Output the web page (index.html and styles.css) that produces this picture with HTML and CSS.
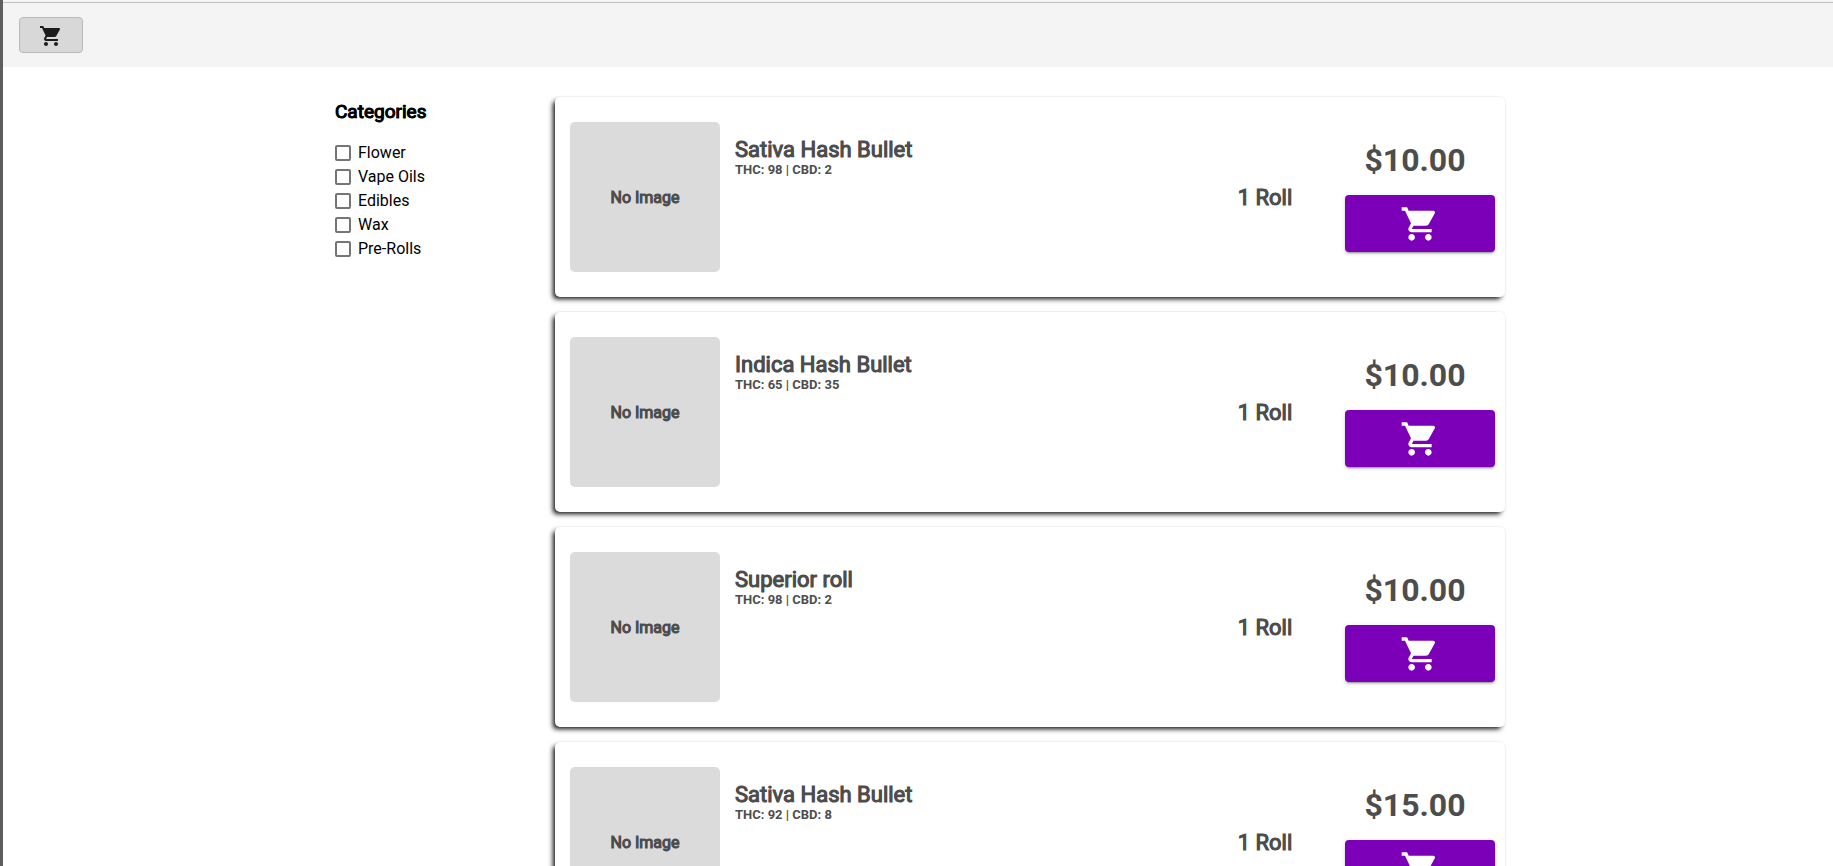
FILE: index.html
```html
<!DOCTYPE html>
<html lang="en">
<head>
<meta charset="utf-8">
<title>Shop</title>
<link rel="stylesheet" href="styles.css">
</head>
<body>
<svg class="sprite" aria-hidden="true"><symbol id="cart" viewBox="0 0 24 24"><path d="M7 18c-1.1 0-1.99.9-1.99 2S5.9 22 7 22s2-.9 2-2-.9-2-2-2zM1 2v2h2l3.6 7.59-1.35 2.45c-.16.28-.25.61-.25.96 0 1.1.9 2 2 2h12v-2H7.42c-.14 0-.25-.11-.25-.25l.03-.12.9-1.63h7.45c.75 0 1.41-.41 1.75-1.03l3.58-6.49c.08-.14.12-.31.12-.48 0-.55-.45-1-1-1H5.21l-.94-2H1zm16 16c-1.1 0-1.99.9-1.99 2s.89 2 1.99 2 2-.9 2-2-.9-2-2-2z"/></symbol></svg>
<header class="topbar">
  <button class="topbar-cart" type="button" aria-label="View cart"><svg class="icon"><use href="#cart"/></svg></button>
</header>
<div class="shop">
  <aside class="filters">
    <h3 class="filters-title">Categories</h3>
    <label class="filter"><input class="check" type="checkbox">Flower</label>
    <label class="filter"><input class="check" type="checkbox">Vape Oils</label>
    <label class="filter"><input class="check" type="checkbox">Edibles</label>
    <label class="filter"><input class="check" type="checkbox">Wax</label>
    <label class="filter"><input class="check" type="checkbox">Pre-Rolls</label>
  </aside>
  <main class="products">
    <article class="card">
      <div class="thumb">No Image</div>
      <div class="info"><h2 class="name">Sativa Hash Bullet</h2><p class="stats">THC: 98 | CBD: 2</p></div>
      <div class="unit">1 Roll</div>
      <div class="buy"><div class="price">$10.00</div><button class="add" type="button" aria-label="Add to cart"><svg class="icon-large"><use href="#cart"/></svg></button></div>
    </article>
    <article class="card">
      <div class="thumb">No Image</div>
      <div class="info"><h2 class="name">Indica Hash Bullet</h2><p class="stats">THC: 65 | CBD: 35</p></div>
      <div class="unit">1 Roll</div>
      <div class="buy"><div class="price">$10.00</div><button class="add" type="button" aria-label="Add to cart"><svg class="icon-large"><use href="#cart"/></svg></button></div>
    </article>
    <article class="card">
      <div class="thumb">No Image</div>
      <div class="info"><h2 class="name">Superior roll</h2><p class="stats">THC: 98 | CBD: 2</p></div>
      <div class="unit">1 Roll</div>
      <div class="buy"><div class="price">$10.00</div><button class="add" type="button" aria-label="Add to cart"><svg class="icon-large"><use href="#cart"/></svg></button></div>
    </article>
    <article class="card">
      <div class="thumb">No Image</div>
      <div class="info"><h2 class="name">Sativa Hash Bullet</h2><p class="stats">THC: 92 | CBD: 8</p></div>
      <div class="unit">1 Roll</div>
      <div class="buy"><div class="price">$15.00</div><button class="add" type="button" aria-label="Add to cart"><svg class="icon-large"><use href="#cart"/></svg></button></div>
    </article>
  </main>
</div>
</body>
</html>
```
FILE: styles.css
```css
* { box-sizing: border-box; }
html { scrollbar-width: none; }
body {
  margin: 0;
  min-height: 100vh;
  border-left: 3px solid #5e5e5e;
  background: #fff;
  color: #000;
  font-family: Roboto, sans-serif;
  font-size: 16px;
}
.sprite { display: none; }
h2, h3, p { margin: 0; }
.topbar {
  display: flex;
  height: 67px;
  padding: 17px 16px 14px;
  background: linear-gradient(#f4f4f4 2px, #c0c0c0 2px, #c0c0c0 3px, #f4f4f4 3px);
}
.topbar-cart {
  display: flex;
  align-items: center;
  justify-content: center;
  width: 64px;
  height: 36px;
  padding: 2px 0 0;
  border: 1px solid #bababa;
  border-radius: 4px;
  background: #d8d8d8;
  color: #1c1c1c;
}
.icon { width: 24px; height: 24px; fill: currentColor; }
.icon-large { width: 40px; height: 40px; fill: currentColor; }
.shop {
  display: grid;
  grid-template-columns: 220px minmax(0, 950px);
  justify-content: center;
  padding: 30px 0 0 4px;
}
.filters { padding-top: 4px; }
.filters-title,
.name,
.unit,
.thumb {
  font-weight: 400;
  -webkit-text-stroke: 1px currentColor;
  text-shadow: 0 0 0 currentColor;
}
.filters-title {
  margin-bottom: 18px;
  font-size: 19px;
  line-height: 22px;
}
.filter {
  display: flex;
  align-items: center;
  gap: 7px;
  line-height: 24px;
}
.check {
  appearance: none;
  width: 16px;
  height: 16px;
  margin: 0;
  border: 2px solid #757575;
  border-radius: 2px;
}
.check:checked { background: #7b00b8; }
.products {
  display: grid;
  gap: 15px;
}
.card {
  display: grid;
  grid-template-columns: 150px 1fr 120px 180px;
  align-items: center;
  min-height: 200px;
  padding-left: 15px;
  border-radius: 5px;
  background: #fff;
  color: #4d4d4d;
  font-weight: 700;
  box-shadow: -3px 3px 5px -1px #111, 0 0 2px rgba(0, 0, 0, 0.1);
}
.thumb {
  display: grid;
  place-items: center;
  height: 150px;
  border-radius: 5px;
  background: #dbdbdb;
}
.info {
  align-self: start;
  padding: 41px 15px 0;
}
.name {
  font-size: 22px;
  line-height: 24px;
}
.stats {
  font-size: 13px;
  line-height: 16px;
}
.unit {
  font-size: 22px;
  text-align: center;
}
.buy { padding-right: 10px; }
.price {
  padding-left: 10px;
  margin-bottom: 16px;
  font-size: 32px;
  line-height: 37px;
  text-align: center;
}
.add {
  display: flex;
  align-items: center;
  justify-content: center;
  width: 150px;
  height: 57px;
  margin-left: auto;
  padding: 0;
  border: 0;
  border-radius: 4px;
  background: #7b00b8;
  color: #fff;
  box-shadow: 0 3px 1px -2px rgba(0, 0, 0, 0.2), 0 2px 2px rgba(0, 0, 0, 0.14), 0 1px 5px rgba(0, 0, 0, 0.12);
}
```
